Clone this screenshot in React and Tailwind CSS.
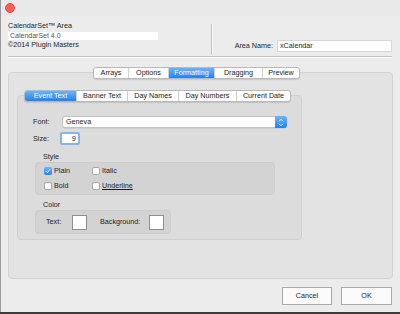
const font = "font-['Liberation_Sans',Arial,sans-serif]";

function TabBar({ items, widths, active }) {
  return (
    <div className="relative z-10 flex h-[12px] rounded-[3px] border border-[#b9b9b9] bg-white shadow-[0_1px_1px_rgba(0,0,0,0.12)] overflow-hidden">
      {items.map((t, i) => (
        <div
          key={t}
          className={
            (i === active
              ? "bg-linear-to-b from-[#6ab3fb] to-[#1c80f6] text-white "
              : "text-[#222] ") +
            (i > 0 ? "border-l border-[#cfcfcf] " : "") +
            widths[i] +
            " flex items-center justify-center text-[7.2px] leading-none"
          }
        >
          {t}
        </div>
      ))}
    </div>
  );
}

function Check({ checked }) {
  return checked ? (
    <div className="w-[8px] h-[8px] rounded-[2px] bg-linear-to-b from-[#6ab3fb] to-[#1f82f6] flex items-center justify-center">
      <svg width="6" height="6" viewBox="0 0 6 6">
        <path d="M1 3.2 L2.4 4.6 L5 1.3" stroke="white" strokeWidth="1" fill="none" />
      </svg>
    </div>
  ) : (
    <div className="w-[8px] h-[8px] rounded-[2px] bg-white border border-[#a9a9a9]" />
  );
}

export default function App() {
  return (
    <div className={"w-[400px] h-[314px] bg-[#3c3c3c] overflow-hidden " + font}>
      <div className="h-[312px] bg-[#ececec] border-l border-[#9b9b9b] flex flex-col text-[#1e1e1e]">
        {/* title bar */}
        <div className="h-[16px] bg-[#e9e9e9] flex items-center pl-[4px]">
          <div className="w-[10px] h-[10px] rounded-full bg-[#fc5f57] border border-[#e1473f]" />
        </div>
        {/* header */}
        <div className="h-[40px] flex pl-[7px]">
          <div className="w-[203px] flex flex-col">
            <div className="mt-[5px] h-[10px] leading-[10px] text-[7.2px]">CalendarSet™ Area</div>
            <div className="mt-[1px] h-[8px] w-[150px] bg-white pl-[2px] text-[7px] leading-[8px] text-[#555]">
              CalendarSet 4.0
            </div>
            <div className="h-[10px] leading-[10px] text-[7.2px] mt-[0px]">©2014 Plugin Masters</div>
          </div>
          <div className="mt-[8px] h-[31px] w-[2px] border-l border-[#c6c6c6] bg-[#f6f6f6]" />
          <div className="flex-1 flex justify-end items-start pr-[8px]">
            <div className="mt-[24px] flex items-center gap-[4px]">
              <span className="text-[7.2px] leading-none">Area Name:</span>
              <div className="w-[115px] h-[12px] bg-white border border-[#d6d6d6] pl-[2px] text-[7.2px] leading-[10px]">
                xCalendar
              </div>
            </div>
          </div>
        </div>
        {/* separator */}
        <div className="ml-[7px] w-[384px] h-[2px] border-t border-[#c4c4c4] bg-[#fafafa]" />
        {/* outer tab view */}
        <div className="mt-[9px] ml-[7px] w-[385px] flex flex-col items-center">
          <div className="ml-[-8px]">
            <TabBar
              items={["Arrays", "Options", "Formatting", "Dragging", "Preview"]}
              widths={["w-[34px]", "w-[40px]", "w-[46px]", "w-[48px]", "w-[37px]"]}
              active={2}
            />
          </div>
          <div className="-mt-[7px] w-full h-[207px] rounded-[4px] border border-[#d2d2d2] bg-[#e3e3e3] pl-[8px]">
            <div className="mt-[17px] w-[285px] flex flex-col items-center">
              <div className="-ml-[4px]">
                <TabBar
                  items={["Event Text", "Banner Text", "Day Names", "Day Numbers", "Current Date"]}
                  widths={["w-[51px]", "w-[51px]", "w-[51px]", "w-[58px]", "w-[54px]"]}
                  active={0}
                />
              </div>
              <div className="-mt-[7px] w-full h-[145px] rounded-[4px] border border-[#d0d0d0] bg-[#dcdcdc] pl-[15px] pt-[20px] flex flex-col">
                {/* font row */}
                <div className="flex items-center h-[12px]">
                  <span className="w-[29px] text-[7.2px] leading-none">Font:</span>
                  <div className="w-[225px] h-[12px] rounded-[3px] bg-white border border-[#c2c2c2] flex items-center shadow-[0_0.5px_0.5px_rgba(0,0,0,0.12)]">
                    <span className="flex-1 pl-[3px] text-[7.2px] leading-none">Geneva</span>
                    <div className="w-[12px] h-[12px] -mr-px rounded-r-[3px] bg-linear-to-b from-[#6ab3fb] to-[#1c80f6] flex items-center justify-center">
                      <svg width="6" height="9" viewBox="0 0 6 9">
                        <path d="M1 3.3 L3 1.3 L5 3.3 M1 5.7 L3 7.7 L5 5.7" stroke="white" strokeWidth="0.9" fill="none" />
                      </svg>
                    </div>
                  </div>
                </div>
                {/* size row */}
                <div className="flex items-center h-[13px] mt-[4px]">
                  <span className="w-[27px] text-[7.2px] leading-none">Size:</span>
                  <div className="w-[20px] h-[13px] rounded-[2px] border-2 border-[#87b3f3] bg-white flex items-center justify-end pr-[2px] text-[7.5px] leading-none">
                    9
                  </div>
                </div>
                {/* style */}
                <div className="mt-[7px] ml-[10px] h-[10px] leading-[10px] text-[7.2px]">Style</div>
                <div className="ml-[2px] w-[240px] h-[33px] rounded-[4px] bg-[#d3d3d3] border border-[#cbcbcb] pl-[8px] pt-[4px] flex flex-col gap-[7px]">
                  <div className="flex items-center h-[8px]">
                    <div className="w-[48px] flex items-center gap-[2px]">
                      <Check checked />
                      <span className="text-[7.2px] leading-none">Plain</span>
                    </div>
                    <div className="flex items-center gap-[2px]">
                      <Check />
                      <span className="text-[7.2px] leading-none">Italic</span>
                    </div>
                  </div>
                  <div className="flex items-center h-[8px]">
                    <div className="w-[48px] flex items-center gap-[2px]">
                      <Check />
                      <span className="text-[7.2px] leading-none">Bold</span>
                    </div>
                    <div className="flex items-center gap-[2px]">
                      <Check />
                      <span className="text-[7.2px] leading-none underline">Underline</span>
                    </div>
                  </div>
                </div>
                {/* color */}
                <div className="mt-[5px] ml-[10px] h-[10px] leading-[10px] text-[7.2px]">Color</div>
                <div className="ml-[2px] w-[136px] h-[24px] rounded-[4px] bg-[#d3d3d3] border border-[#cbcbcb] flex items-center pl-[10px]">
                  <span className="w-[26px] text-[7.2px] leading-none">Text:</span>
                  <div className="w-[15px] h-[15px] bg-white border border-[#8e8e8e]" />
                  <span className="ml-[13px] w-[49px] text-[7.2px] leading-none">Background:</span>
                  <div className="w-[15px] h-[15px] bg-white border border-[#8e8e8e]" />
                </div>
              </div>
            </div>
          </div>
        </div>
        {/* buttons */}
        <div className="mt-[8px] flex justify-end gap-[9px] pr-[8px]">
          <div className="w-[50px] h-[18px] border border-[#a9a9a9] bg-[#fbfbfb] flex items-center justify-center text-[7.2px] leading-none">
            Cancel
          </div>
          <div className="w-[51px] h-[18px] border border-[#a9a9a9] bg-[#fbfbfb] flex items-center justify-center text-[7.2px] leading-none">
            OK
          </div>
        </div>
      </div>
    </div>
  );
}
